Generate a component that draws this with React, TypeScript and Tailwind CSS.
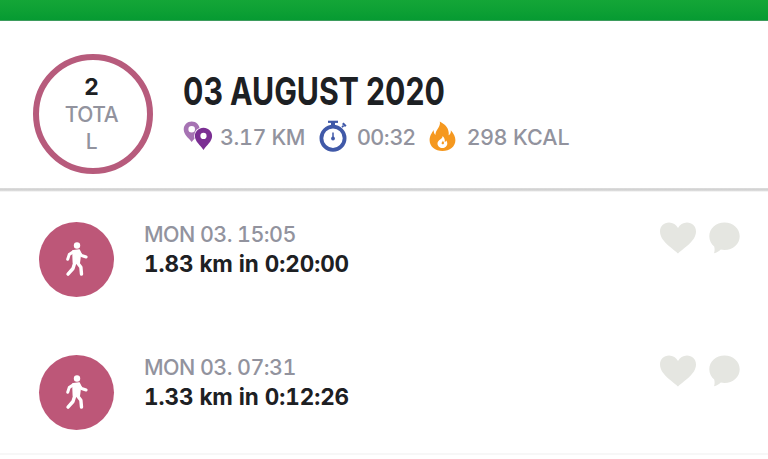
import type { ReactNode } from "react";

interface Activity {
  id: number;
  date: string;
  summary: string;
}

const activities: Activity[] = [
  { id: 1, date: "MON 03. 15:05", summary: "1.83 km in 0:20:00" },
  { id: 2, date: "MON 03. 07:31", summary: "1.33 km in 0:12:26" },
];

function PinsIcon() {
  return (
    <svg width="30" height="30" viewBox="0 0 30 30" fillRule="evenodd">
      <path
        fill="#a673b3"
        d="M8.700.5C4.200.5.700 4 .700 8.500c0 5.200 5 8.500 8 12.500 3-4 8-7.300 8-12.500C16.700 4 13.200.5 8.700.5Zm0 4.500a3.300 3.300 0 1 1 0 6.600 3.300 3.300 0 0 1 0-6.600Z"
      />
      <path
        fill="#7b2f93"
        stroke="#fff"
        strokeWidth="1.600"
        paintOrder="stroke"
        d="M20.500 6.700c-4.900 0-8.600 3.700-8.600 8.300 0 5.500 5.600 9.400 8.600 13.900 3-4.500 8.600-8.400 8.600-13.900 0-4.600-3.700-8.300-8.600-8.300Z"
      />
      <circle cx="20.500" cy="14.900" r="3.100" fill="#fff" />
    </svg>
  );
}

function StopwatchIcon() {
  return (
    <svg width="30" height="32" viewBox="0 0 30 32" fill="none" stroke="#4059a8">
      <circle cx="14" cy="18.200" r="11.600" strokeWidth="3.800" />
      <path strokeWidth="2.200" d="M9 1.800h10" />
      <path strokeWidth="4" d="M14 2v4" />
      <path strokeWidth="2.200" d="m23.800 3.200 3 3" />
      <path strokeWidth="1.600" d="m23 7.300 1.500-1.700" />
      <path strokeWidth="1.500" d="M14 12.500v6" />
      <circle cx="14" cy="18.500" r="1.900" fill="#4059a8" stroke="none" />
    </svg>
  );
}

function FlameIcon() {
  return (
    <svg width="27" height="32" viewBox="0 0 27 32">
      <path
        fill="#f5981f"
        d="M10.800 1.500c4.200 2.200 8.600 5.600 8.900 11.100.1 1.100.1 1.900-.1 2.600 1.700-.9 2.500-2.500 2.200-5 3 3.500 4.600 6.500 4.600 10.100 0 6.300-5.700 10.700-12.900 10.700S.6 26.600.6 20.300c0-4.600 2.300-7.200 3.900-10.300.3 2.300.7 3.800 1.900 4.900.2-5.400 5.600-8 4.400-13.400Z"
      />
      <path
        fill="#fff"
        d="M13.600 16c.3 3.200-5.100 3.700-5.100 7.600 0 2.700 2.200 4.500 4.900 4.500s4.900-1.800 4.900-4.500c0-1.200-.4-2.200-1.100-3-.3.900-.8 1.400-1.500 1.600.5-2.700-.4-4.700-2.100-6.200Z"
      />
      <path fill="#f5981f" d="M13.800 20.500c.1 1.400-1.200 1.600-1.200 2.700 0 .8.600 1.100 1.200 1.100s1.200-.5 1.200-1.300c0-.9-.7-1.500-1.200-2.500Z" />
    </svg>
  );
}

function WalkerIcon() {
  return (
    <svg width="26" height="36" viewBox="0 0 26 36" fill="none" stroke="#fff" strokeLinecap="round" strokeLinejoin="round">
      <circle cx="13" cy="3.500" r="3.200" fill="#fff" stroke="none" />
      <path fill="#fff" strokeWidth="2.200" d="m9.300 9 5.800-.6.900 4-1 8-5.300.2-.2-5Z" />
      <path strokeWidth="3" d="m9.700 9.500-4.500 3.100-1.500 4.600" />
      <path strokeWidth="3" d="m15 9.700 2.500 3.800 4.600 1.500" />
      <path strokeWidth="3.400" d="m11 20-2 6.500-5 5.600" />
      <path strokeWidth="3.400" d="m12.900 20 4 5.300.6 6.800" />
    </svg>
  );
}

function HeartIcon() {
  return (
    <svg width="36" height="32" viewBox="0 0 36 32">
      <path
        fill="#e5e6e1"
        d="M18 31.500C15.500 28 0 20 0 9.400 0 4.200 4 .5 9 .5c4 0 7.200 2.200 9 5.600C19.800 2.700 23 .5 27 .5c5 0 9 3.700 9 8.900C36 20 20.500 28 18 31.500Z"
      />
    </svg>
  );
}

function CommentIcon() {
  return (
    <svg width="31" height="32" viewBox="0 0 31 32">
      <path
        fill="#e5e6e1"
        d="M15.500.5C7 .5.300 6.500.300 14.200c0 4.300 1.900 7.700 4.900 10.200.6 2.500.5 4.600-.2 6.800 2.800-.6 5-1.800 6.800-3.700 1.200.3 2.400.4 3.700.4 8.500 0 15.200-6 15.200-13.700S24 .5 15.500.5Z"
      />
    </svg>
  );
}

function Stat({ icon, children, className }: { icon: ReactNode; children: ReactNode; className: string }) {
  return (
    <div className={`flex h-8 items-center whitespace-nowrap ${className}`}>
      {icon}
      <span className="pt-[2px] text-[21.500px] leading-8 font-[450] text-[#92939e]">{children}</span>
    </div>
  );
}

function ActivityRow({ activity }: { activity: Activity }) {
  return (
    <li className="flex h-[133px] items-start pt-[30px] pr-[28px] pl-[39px]">
      <div className="flex size-[75px] shrink-0 items-center justify-center rounded-full bg-[#bd5778]">
        <WalkerIcon />
      </div>
      <div className="ml-[30px] flex-1 whitespace-nowrap tabular-nums">
        <p className="mt-[-3px] text-[21.500px] leading-[30px] font-[450] tracking-[-0.026em] text-[#92939e]">{activity.date}</p>
        <p className="text-[22.500px] leading-[30px] font-[650] tracking-[-0.003em] text-[#1d2023]">{activity.summary}</p>
      </div>
      <div className="flex gap-[13px]">
        <HeartIcon />
        <CommentIcon />
      </div>
    </li>
  );
}

export default function App() {
  return (
    <main className="h-[459px] w-[768px] overflow-hidden bg-white font-['Inter',sans-serif]">
      <div className="h-[21px] border-b border-[#3d9c5d] bg-linear-to-b from-[#14a637] to-[#069b32]" />
      <header className="flex h-[167px] items-start pt-[32px] pl-[33px]">
        <div className="mt-[0.500px] flex size-[120px] shrink-0 flex-col items-center rounded-full border-[6px] border-[#b75b7c] pt-[13px] pr-[3px]">
          <span className="text-[23px] leading-[28px] font-bold text-[#1d2023]">2</span>
          <span className="w-14 text-center text-[21px] leading-[27px] font-[450] tracking-[-0.020em] break-all text-[#92939e]">
            TOTAL
          </span>
        </div>
        <div className="ml-[29.500px] pt-[17px]">
          <h1 className="origin-left scale-x-[0.785] text-[38.500px] leading-[42px] font-[650] whitespace-nowrap text-[#1d2023]">
            03 AUGUST 2020
          </h1>
          <div className="mt-[8px] flex items-center">
            <Stat icon={<PinsIcon />} className="w-[136.500px] gap-[7.500px] tracking-[-0.024em] tabular-nums">3.17 KM</Stat>
            <Stat icon={<StopwatchIcon />} className="w-[110px] gap-[8px] tracking-[-0.036em]">00:32</Stat>
            <Stat icon={<FlameIcon />} className="gap-[11px]">298 KCAL</Stat>
          </div>
        </div>
      </header>
      <div className="h-1 bg-linear-to-b from-[#dedede] via-[#cfcfcf] to-white" />
      <ul className="h-[261px]">
        {activities.map((activity) => (
          <ActivityRow key={activity.id} activity={activity} />
        ))}
      </ul>
      <div className="h-[2px] bg-[#f7f7f7]" />
    </main>
  );
}
